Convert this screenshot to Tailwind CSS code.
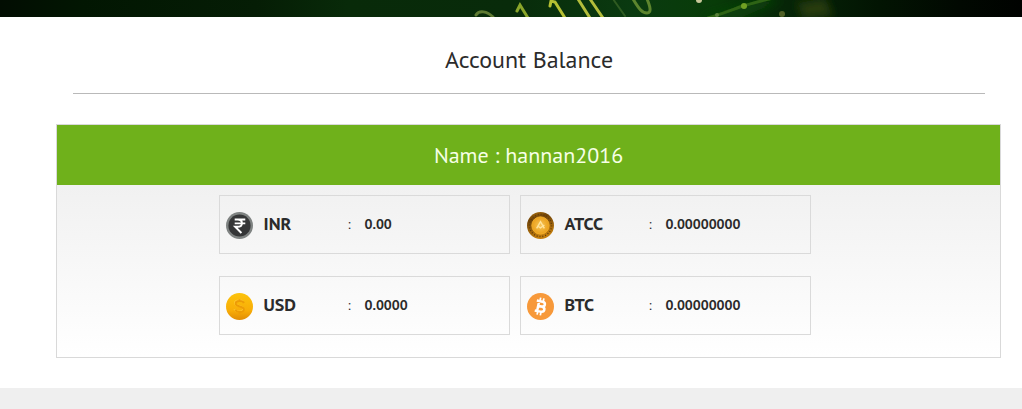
<!DOCTYPE html>
<html lang="en">
<head>
<meta charset="utf-8">
<meta name="viewport" content="width=device-width, initial-scale=1">
<title>Account Balance</title>
<script src="https://cdn.jsdelivr.net/npm/@tailwindcss/browser@4"></script>
</head>
<body class="flex min-h-screen flex-col bg-white font-['PT_Sans','Noto_Sans',sans-serif] text-[#2b2b2b]">
<header class="h-[17px] shrink-0 overflow-hidden bg-black">
  <svg class="block h-full w-full" viewBox="0 0 1022 17" preserveAspectRatio="none" aria-hidden="true">
    <defs>
      <linearGradient id="sky"><stop offset="0" stop-color="#020d02"/><stop offset=".08" stop-color="#021602"/><stop offset=".25" stop-color="#051d05"/><stop offset=".34" stop-color="#082a09"/><stop offset=".5" stop-color="#082b0a"/><stop offset=".62" stop-color="#0a3a10"/><stop offset=".7" stop-color="#083c08"/><stop offset=".77" stop-color="#062507"/><stop offset=".86" stop-color="#021402"/><stop offset=".94" stop-color="#010801"/><stop offset="1" stop-color="#000200"/></linearGradient>
      <filter id="soft" x="-10%" y="-50%" width="120%" height="200%"><feGaussianBlur stdDeviation=".6"/></filter>
      <filter id="haze" x="-50%" y="-50%" width="200%" height="200%"><feGaussianBlur stdDeviation="4"/></filter>
    </defs>
    <path fill="url(#sky)" d="M0 0h1022v17H0z"/>
    <path fill="#263a08" filter="url(#haze)" d="M797 3l28-5 8 18-30 3z"/>
    <path fill="#0f420a" filter="url(#haze)" d="M700 18l58-18h24l-42 18z"/>
    <g fill="none" stroke-linecap="round" filter="url(#soft)">
      <path stroke="#5e7a32" stroke-width="3" d="M476 15c3-5 11-4 17 2"/>
      <path stroke="#8aa52a" stroke-width="3" d="M517 11l3-6 8 13"/>
      <path stroke="#b5bf32" stroke-width="3" d="M550 6l1-5 4 1 10 16"/>
      <path stroke="#b3bd3b" stroke-width="3" d="M578-1l12 19M590-1l13 19"/>
      <path stroke="#2f5a20" stroke-width="2" d="M613-1l12 17"/>
      <path stroke="#5d852e" stroke-width="3" d="M633-1c6 10 9 14 14 14s3-7 0-14"/>
      <path stroke="#2f6412" stroke-width="3" d="M708 18c17-5 26-9 35-12 10-3 20-6 31-8"/>
    </g>
    <g filter="url(#soft)"><circle cx="744" cy="6" r="3" fill="#6fa024"/><circle cx="717" cy="15" r="2" fill="#58803a"/><circle cx="699" cy="0" r="3" fill="#c8c79a"/><circle cx="782" cy="14" r="3" fill="#4f6028"/></g>
  </svg>
</header>

<main class="flex-1 pb-[30px] pl-14 pr-[21px]">
  <div class="ml-[17px] mr-4 border-b border-[#b9b9b9] pb-4 pt-[26px] text-center">
    <h1 class="text-[24px] leading-[34px]">Account Balance</h1>
  </div>
  <section class="mt-[30px] border border-[#d9d9d9] bg-linear-to-b from-[#ececec] to-white">
    <h2 class="bg-[#6fb11b] text-center text-[22px] leading-[60px] text-[#f6ffe6]">Name : hannan2016</h2>
    <dl class="grid grid-cols-[repeat(2,minmax(0,291px))] justify-center gap-x-[10px] gap-y-[22px] pb-[22px] pr-7 pt-[10px]">
      <div class="flex h-[59px] items-center border border-[#dadada] px-1.5">
        <dt class="flex w-[122px] items-center gap-[11px] pb-0.5 text-[18px] leading-6 font-semibold">
          <svg class="mt-1 size-[27px] shrink-0" viewBox="0 0 28 28" aria-hidden="true"><circle cx="14" cy="14" r="14" fill="#7f8382"/><circle cx="14" cy="14" r="11.500" fill="#353637"/><path d="M9 7.800h11M9 11.800h11M9 7.800h3c6 0 6 7.500 0 7.500H9.500l6.500 6.500" fill="none" stroke="#fff" stroke-width="2"/></svg>
          INR
        </dt>
        <dd class="flex flex-1 pb-0.5 text-sm font-semibold"><span class="w-[17px] font-normal">:</span>0.00</dd>
      </div>
      <div class="flex h-[59px] items-center border border-[#dadada] px-1.5">
        <dt class="flex w-[122px] items-center gap-[11px] pb-0.5 text-[18px] leading-6 font-semibold">
          <svg class="mt-1 size-[27px] shrink-0" viewBox="0 0 28 28" aria-hidden="true"><defs><linearGradient id="rim" x2=".3" y2="1"><stop stop-color="#b8780d"/><stop offset=".3" stop-color="#704307"/><stop offset="1" stop-color="#c57f0e"/></linearGradient><radialGradient id="gold"><stop stop-color="#f6c456"/><stop offset="1" stop-color="#eba01b"/></radialGradient></defs><circle cx="14" cy="14" r="14" fill="url(#rim)"/><circle cx="14" cy="14" r="11.500" fill="none" stroke="#5f3c0b" stroke-dasharray="1 2" stroke-width="1.500"/><circle cx="14" cy="14" r="9" fill="url(#gold)" stroke="#f0ae2b"/><path d="M10 17l4-7 4 7M11 14.500l3 2 4-3" fill="none" stroke="#ffe39b" stroke-width="1.500"/></svg>
          ATCC
        </dt>
        <dd class="flex flex-1 pb-0.5 text-sm font-semibold"><span class="w-[17px] font-normal">:</span>0.00000000</dd>
      </div>
      <div class="flex h-[59px] items-center border border-[#dadada] px-1.5">
        <dt class="flex w-[122px] items-center gap-[11px] pb-0.5 text-[18px] leading-6 font-semibold">
          <svg class="mt-1 size-[27px] shrink-0" viewBox="0 0 28 28" aria-hidden="true"><defs><linearGradient id="coin" x2="0" y2="1"><stop stop-color="#fcc30c"/><stop offset=".65" stop-color="#f8ad08"/><stop offset="1" stop-color="#e18d06"/></linearGradient></defs><circle cx="14" cy="14" r="14" fill="url(#coin)"/><path d="M18.500 10.500c-1-3-8.500-3-8.500.5 0 4 8.500 2 8.500 6 0 3.800-8 3.500-9 .2" fill="none" stroke="#ffc933" stroke-width="2" transform="translate(-.7 -.7)"/><path d="M18.500 10.500c-1-3-8.500-3-8.500.5 0 4 8.500 2 8.500 6 0 3.800-8 3.500-9 .2M14 6.500v2M14 19.500v2" fill="none" stroke="#ed9c06" stroke-width="2"/></svg>
          USD
        </dt>
        <dd class="flex flex-1 pb-0.5 text-sm font-semibold"><span class="w-[17px] font-normal">:</span>0.0000</dd>
      </div>
      <div class="flex h-[59px] items-center border border-[#dadada] px-1.5">
        <dt class="flex w-[122px] items-center gap-[11px] pb-0.5 text-[18px] leading-6 font-semibold">
          <svg class="mt-1 size-[27px] shrink-0" viewBox="0 0 28 28" aria-hidden="true"><circle cx="14" cy="14" r="14" fill="#f7993a"/><g transform="rotate(12 14 14)" fill="none" stroke="#fff"><path stroke-width="2.600" d="M11.500 8.800v10.400M9 8.800h6c4 0 4 4.900 0 4.900h-3.500M15 13.700c4.800 0 4.800 5.500 0 5.500H9"/><path stroke-width="1.800" d="M12.300 5v4M15.700 5v4M12.300 19v4M15.700 19v4"/></g></svg>
          BTC
        </dt>
        <dd class="flex flex-1 pb-0.5 text-sm font-semibold"><span class="w-[17px] font-normal">:</span>0.00000000</dd>
      </div>
    </dl>
  </section>
</main>
<footer class="h-[21px] shrink-0 bg-[#efefef]"></footer>
</body>
</html>
